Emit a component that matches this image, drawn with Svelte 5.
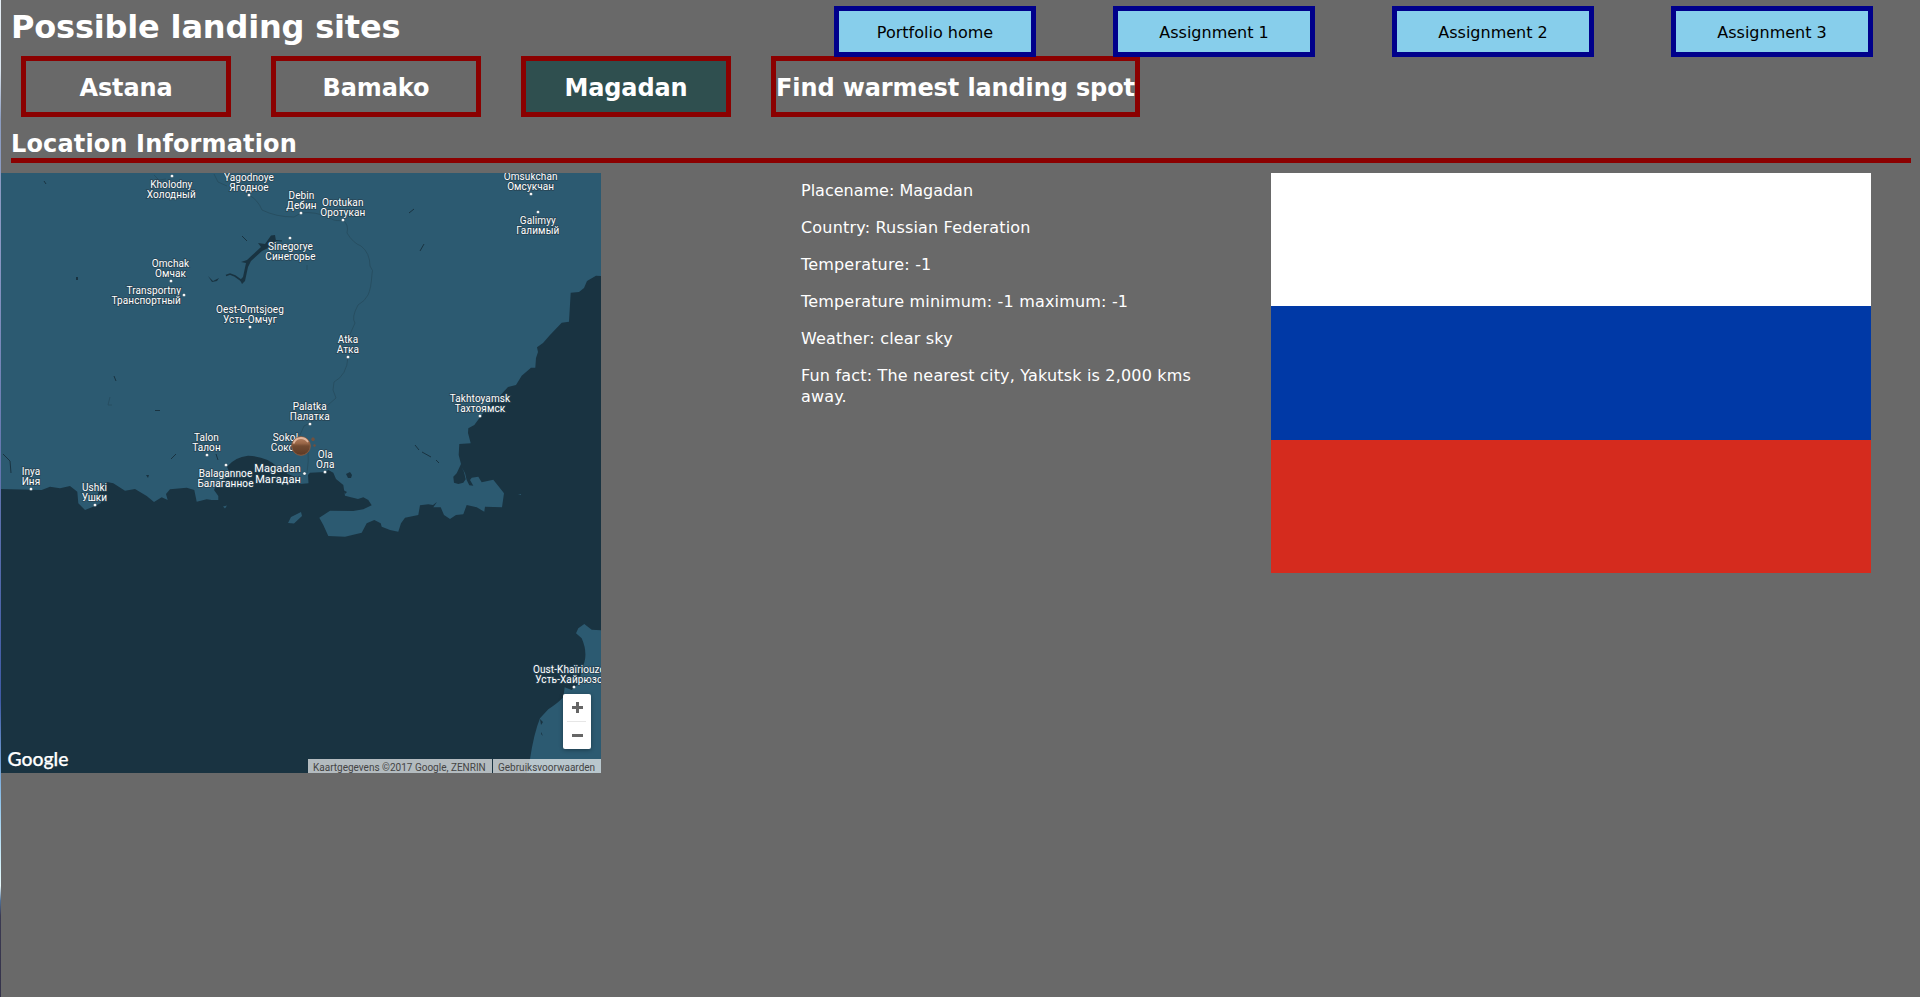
<script>
  const nav = ['Portfolio home', 'Assignment 1', 'Assignment 2', 'Assignment 3'];
  const sites = ['Astana', 'Bamako', 'Magadan', 'Find warmest landing spot'];
  let active = $state('Magadan');

  const facts = [
    'Placename: Magadan',
    'Country: Russian Federation',
    'Temperature: -1',
    'Temperature minimum: -1 maximum: -1',
    'Weather: clear sky',
    'Fun fact: The nearest city, Yakutsk is 2,000 kms away.'
  ];

  // x, baseline, latin name, local name, town dot, anchor, font size
  const places = [
    [171.3, 187.8, 'Kholodny', 'Холодный', [172, 176]],
    [249, 180.8, 'Yagodnoye', 'Ягодное', [249, 195]],
    [301.5, 198.8, 'Debin', 'Дебин', [301, 213]],
    [342.8, 205.8, 'Orotukan', 'Оротукан', [343, 220]],
    [530.7, 180, 'Omsukchan', 'Омсукчан', [531, 194]],
    [537.8, 223.8, 'Galimyy', 'Галимый', [538, 212]],
    [290.5, 249.8, 'Sinegorye', 'Синегорье', [290, 238]],
    [170.5, 266.8, 'Omchak', 'Омчак', [171, 281]],
    [181, 293.8, 'Transportny', 'Транспортный', [184, 295], 'end'],
    [250, 312.8, 'Oest-Omtsjoeg', 'Усть-Омчуг', [250, 327]],
    [348, 342.8, 'Atka', 'Атка', [348, 357]],
    [309.7, 409.8, 'Palatka', 'Палатка', [310, 424]],
    [480, 401.8, 'Takhtoyamsk', 'Тахтоямск', [480, 416]],
    [206.5, 440.8, 'Talon', 'Талон', [207, 455]],
    [285.5, 440.8, 'Sokol', 'Сокол', null],
    [325.3, 457.8, 'Ola', 'Ола', [325, 472]],
    [301, 471.8, 'Magadan', 'Магадан', [304.5, 473.5], 'end', 11],
    [225.5, 476.8, 'Balagannoe', 'Балаганное', [226, 465]],
    [31, 474.8, 'Inya', 'Иня', [31, 489]],
    [94.5, 490.8, 'Ushki', 'Ушки', [95, 505]],
    [533, 672.8, 'Oust-Khaïriouzovo', 'Усть-Хайрюзово', [574, 687], 'start', 10, 535.3]
  ];
</script>

<div class="page">
  <header>
    <h1>Possible landing sites</h1>
    <nav>
      {#each nav as item}<a class="link">{item}</a>{/each}
    </nav>
  </header>

  <div class="sites">
    {#each sites as site}
      <button class:active={site === active} onclick={() => (active = site)}>{site}</button>
    {/each}
  </div>

  <h2>Location Information</h2>

  <main>
    <div class="map">
      <svg width="600" height="600" viewBox="1 173 600 600">
        <defs>
          <linearGradient id="pin" x1="0" y1="0" x2="0" y2="1">
            <stop offset="0" stop-color="#b98263" />
            <stop offset=".35" stop-color="#9a6748" />
            <stop offset=".5" stop-color="#724a31" />
            <stop offset="1" stop-color="#5c3a26" />
          </linearGradient>
        </defs>
        <rect x="1" y="173" width="600" height="600" fill="#193341" />
        <path class="land" d="M1 173H601V276L596 275.7 587 281 584 288 579 292 570.7 292.7 569 321.7 561.7 322.7 550 335 543 343 537 347.3 538 352 536 358 535.3 367.7 531 367.7 521.7 375.7 516 385 508 387 500.7 395 490 404 481.7 415 474.3 425 468.3 428.3 468 433 470.7 443.3 459.3 444 458.7 455 461 464 456.7 473.3 453.3 476.7 454 482.7 458.3 484 463.3 482.7 465.7 479.3 464 472 461.7 467.3 465 473 466.7 480 469.3 485.3 473.3 485.7 470 480 471.7 477.7 478.3 476.7 481.7 482.3 493.3 479.7 498.3 486 504 493.3 502 507.3 485 506.7 484.3 511.7 476.7 507.3 466.7 505 463.3 514.3 456 515 450 519 444 515 440.7 507.3 433.3 507.3 437 502 433 505 428.3 504.3 420 505.3 418.3 515 405 517.7 401 523.3 398.3 531.7 390 530 381.7 526.7 380.7 523.3 374.3 520 366.7 523.3 361.7 532.7 345 536.7 328.3 536 323.3 525 319.3 517.7 330 510.7 353.3 511 363.3 509.3 371.7 505.3 368.3 500 363.3 497.3 358 499 345 495.7 343.3 485 336 479 333.3 472.7 328.3 470 325 472 310 472.7 308 475 308.5 483.3 300 484 298 478 288 474 277 466.7 Q267 456.5 248 455.7 Q235 457 227 466.7L231 476 217 483 214 490 218.3 496 218.3 500 211.7 500 206.7 499.3 196.7 501.7 194.3 490 186.7 487.7 170 489.3 166 494 167.7 500 161.7 497.3 154 502 146.7 496 135 489 125 490.7 113.3 483.3 107 482 98 493 101 503 95 506 85 510 78.3 503.3 77.3 491.7 70 486 60 488.3 50 486.7 41.7 490 1 489Z" />
        <path class="land" d="M601 630.3L591.7 629.7 584.3 624 578.3 628.3 576 633.3 581.7 638.3Q589 655 582 668L579 683 571.7 690 564.7 687.3 563.3 697.3Q558 703 548.3 709.3L540 718.3Q534 733 530 759L527 773H601ZM301 512L291 517 288 523 294 523.5 302 516ZM223 506.5L227 505.5 225 508.500ZM518 495l3-1v1z" />
        <g fill="#193341">
          <path d="M271 235.500L275 235 276 241 268 248 262 251 251 261 248 267 245 281 242 284 240 280 243 277 246 263 241 262 247 260 261 247 258 243 265 244ZM208 276l5 5 6-3-2 3-5 1zM346 474l4-2 2 3-1 3-3 0zM76 277h2v3h-2zM146 475h3l-1 3zM343 490l4 2-2 2zM540 719l3 3-2 3zM541 732l2 4-2-2z" />
          <path d="M226 275.500l4-1.500 5 2 7 5" fill="none" stroke="#193341" stroke-width="1.600" />
        </g>
        <path class="creek" d="M44 181l2 3M242 236l5 5M114 376l2 5M155 410.500h5M171 459l5-5M216 454l2 6M3 454l7 7 1 12M415 445l4 5M422 452l9 5M436 460l3 3M409 213l5-4M420 251l4-7M276 240.500l6 .5" />
        <path class="road" d="M154 175l5 5 7-1M214 174l4 8 9 4M249 195q9 5 13 15 14 7 32 7l7-4q14-2 29 5 5 4 13 2 6 5 4 13 6 10 14 13 9 7 9 20 4 5 2 8-1 15-4 21-3 6-10 10-7 13-3 18l-8 18M348 357q-1 18-14 25l-1 8 3 8-8 7-18 18-6 3-4 9M308 450q1 10-1 23M110 397l-2 8 4 0M307 265v5" />
        <g class="labels">
          {#each places as [x, y, name, local, dot, anchor = 'middle', size = 10, localX = x]}
            <text {x} {y} text-anchor={anchor} font-size={size}>{name}<tspan x={localX} dy={size}>{local}</tspan></text>
            {#if dot}<circle cx={dot[0]} cy={dot[1]} r="1.600" />{/if}
          {/each}
        </g>
        <circle cx="301" cy="446" r="9.300" fill="url(#pin)" stroke="#8a5b40" />
        <path d="M293.500 443.500q2-5.500 7.500-5.500 4.500 0 7 4" fill="none" stroke="#e0b59b" stroke-width="1.800" />
        <path d="M311 439l2-2 2 2-1 2h-2zM313 445l2-1 1 2-2 1z" fill="#70503f" />
        <text class="logo" x="7.500" y="765.500" textLength="61" lengthAdjust="spacingAndGlyphs">Google</text>
      </svg>
      <div class="zoom">
        <svg width="28" height="55" viewBox="0 0 28 55">
          <path d="M9 13.500h11M14.500 8v11M9 41.500h11" stroke="#666" stroke-width="3" />
          <path d="M4 27.500h19" stroke="#e6e6e6" />
        </svg>
      </div>
      <div class="terms"><span>Kaartgegevens ©2017 Google, ZENRIN</span><span>Gebruiksvoorwaarden</span></div>
    </div>
    <section>
      {#each facts as fact}<p>{fact}</p>{/each}
    </section>
    <div class="flag"><i></i><i></i><i></i></div>
  </main>
</div>

<style>
  :global(body) { margin: 0; background: #696969; overflow: hidden; }
  .page {
    box-sizing: border-box;
    height: 997px;
    border-left: 1px solid;
    border-image: linear-gradient(#e6eef4 0, #dce6f0 70px, #8b9cc0 120px, #8b98c4 250px, #6678b0 450px, #3f5aa5 700px, #8fc3ea 800px, #d8f4fb 870px, #e8f8fa 885px, #4f6f96 900px, #3b3a52 915px, #34324a 997px) 1;
    font-family: Verdana, "DejaVu Sans", sans-serif;
    font-size: 16px;
    color: #fff;
  }
  header { display: flex; height: 56px; }
  h1 { margin: 8px 0 0 10px; width: 823px; font-size: 32px; line-height: 39px; letter-spacing: -.18px; white-space: nowrap; }
  nav { display: flex; gap: 77px; padding-top: 6px; position: relative; z-index: 1; }
  .link {
    box-sizing: border-box; width: 202px; height: 51px; border: 5px solid #00008b;
    background: #87ceeb; color: #000; text-align: center; line-height: 43px;
  }
  .sites { display: flex; gap: 40px; padding-left: 20px; }
  button {
    box-sizing: border-box; width: 210px; height: 61px; padding: 3px 0 0; border: 5px solid #8b0000;
    background: none; color: #fff; font: bold 24px/48px Verdana, "DejaVu Sans", sans-serif;
    letter-spacing: -.12px; white-space: nowrap;
  }
  button:last-child { width: 369px; }
  .active { background: #2f4f4f; }
  h2 { margin: 11px 9px 10px 10px; height: 30px; border-bottom: 5px solid #8b0000; font-size: 24px; line-height: 32px; letter-spacing: .14px; }
  main { display: flex; align-items: flex-start; }
  .map { position: relative; width: 600px; height: 600px; font-family: Roboto, sans-serif; }
  .map svg { display: block; }
  .land { fill: #2c5a71; }
  .creek { fill: none; stroke: #193341; stroke-width: 1; }
  .road { fill: none; stroke: #264b5d; stroke-width: .8; }
  .labels text { fill: #fff; stroke: #284454; stroke-width: 1.6px; paint-order: stroke; letter-spacing: .1px; }
  .labels circle { fill: #fff; stroke: #284454; stroke-width: .4px; }
  .logo { fill: #fff; stroke: #fff; stroke-width: .25px; font: 500 19px Lato, sans-serif; }
  .zoom { position: absolute; left: 562px; top: 521px; width: 28px; height: 55px; background: #fff; border-radius: 2px; box-shadow: 0 1px 4px #0005; }
  .terms { position: absolute; right: 0; bottom: 0; display: flex; gap: 1px; font-size: 10px; line-height: 15px; color: #444; white-space: nowrap; }
  .terms span { box-sizing: border-box; height: 14px; padding: 1px 5px 0; background: rgba(245, 245, 245, .7); line-height: 16px; }
  .terms span:first-child { width: 184px; }
  .terms span:last-child { width: 108px; }
  section { width: 400px; margin-left: 200px; padding-top: 7px; }
  p { margin: 0 0 16px; line-height: 21px; letter-spacing: .18px; }
  p:first-child { letter-spacing: 0; }
  .flag { width: 600px; height: 400px; margin-left: 70px; display: grid; grid-template-rows: repeat(3, 1fr); background: #fff; }
  .flag i:nth-child(2) { background: #0039a6; }
  .flag i:nth-child(3) { background: #d52b1e; }
</style>
